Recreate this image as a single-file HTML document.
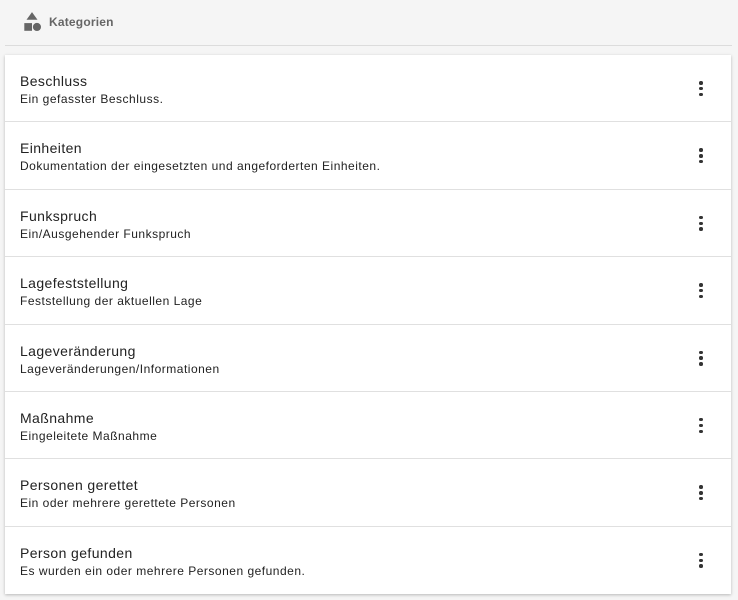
<!DOCTYPE html>
<html><head><meta charset="utf-8"><style>
*{margin:0;padding:0;box-sizing:border-box}
body{width:738px;height:600px;background:#f5f5f5;font-family:"Liberation Sans",sans-serif;overflow:hidden;position:relative}
.hdr{position:absolute;left:5px;top:0;width:727px;height:46px;border-bottom:1px solid #dcdcdc}
.hdr svg{position:absolute;left:16px;top:11px}
.hdr span{position:absolute;left:44px;top:15px;font-size:12px;font-weight:bold;color:#666;letter-spacing:0.2px}
.card{position:absolute;left:5px;top:55px;width:726px;height:539px;background:#fff;box-shadow:0 1px 3px rgba(0,0,0,.25)}
.row{height:67.4px;border-bottom:1px solid #e0e0e0;position:relative}
.row:last-child{border-bottom:none}
.t{position:absolute;left:15px;top:18px;font-size:14px;color:#222;letter-spacing:0.4px}
.s{position:absolute;left:15px;top:37px;font-size:12px;color:#222;letter-spacing:0.5px}
.d{position:absolute;left:694px;top:26px;width:4px}
.d i{display:block;width:3.5px;height:3.5px;border-radius:50%;background:#333;margin-bottom:2.3px}
</style></head><body>
<div class="hdr"><svg width="22" height="22" viewBox="0 0 20 20" fill="#666"><polygon points="10,1 5,8 15,8"/><rect x="3" y="11" width="7" height="7"/><circle cx="14.5" cy="14.5" r="3.7"/></svg><span>Kategorien</span></div>
<div class="card">
<div class="row"><div class="t">Beschluss</div><div class="s">Ein gefasster Beschluss.</div><div class="d"><i></i><i></i><i></i></div></div>
<div class="row"><div class="t">Einheiten</div><div class="s">Dokumentation der eingesetzten und angeforderten Einheiten.</div><div class="d"><i></i><i></i><i></i></div></div>
<div class="row"><div class="t">Funkspruch</div><div class="s">Ein/Ausgehender Funkspruch</div><div class="d"><i></i><i></i><i></i></div></div>
<div class="row"><div class="t">Lagefeststellung</div><div class="s">Feststellung der aktuellen Lage</div><div class="d"><i></i><i></i><i></i></div></div>
<div class="row"><div class="t">Lageveränderung</div><div class="s">Lageveränderungen/Informationen</div><div class="d"><i></i><i></i><i></i></div></div>
<div class="row"><div class="t">Maßnahme</div><div class="s">Eingeleitete Maßnahme</div><div class="d"><i></i><i></i><i></i></div></div>
<div class="row"><div class="t">Personen gerettet</div><div class="s">Ein oder mehrere gerettete Personen</div><div class="d"><i></i><i></i><i></i></div></div>
<div class="row"><div class="t">Person gefunden</div><div class="s">Es wurden ein oder mehrere Personen gefunden.</div><div class="d"><i></i><i></i><i></i></div></div>
</div>
</body></html>
